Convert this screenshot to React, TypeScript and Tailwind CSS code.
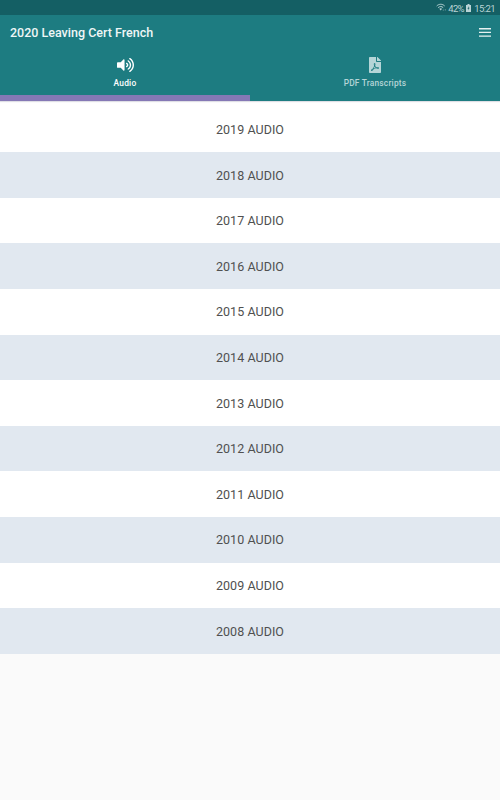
import { FaFilePdf, FaVolumeUp } from "react-icons/fa";

const years = [2019, 2018, 2017, 2016, 2015, 2014, 2013, 2012, 2011, 2010, 2009, 2008];

const StatusBar = () => {
  return (
    <div className="flex h-[15px] items-center justify-end bg-[#145f64] pt-px pr-[5px] text-[9.5px] leading-none text-[#b9d3d5]">
      <svg width="11" height="9" viewBox="0 0 11 9" fill="none" stroke="currentColor" className="mr-px mb-[2px]">
        <path d="M.7 3C3 .7 6.400 .7 8.700 3M2.200 4.600c1.500-1.400 3.500-1.400 5 0" strokeWidth="1" />
        <path d="M3.300 5.800c.9-.8 2-.8 2.800 0L4.700 7.400z" fill="currentColor" stroke="none" />
        <path d="M7.300 6.500v1.300M9.300 6v1.600" strokeWidth=".7" opacity=".6" />
      </svg>
      <span className="w-[15px] pt-px whitespace-nowrap tracking-[-0.7px]">42%</span>
      <svg width="5" height="8" viewBox="0 0 5 8" className="mr-[3px] mb-px ml-[3px]">
        <path d="M1.500 0h2v1H5v7H0V1h1.500z" fill="currentColor" />
        <path d="M2.800 2L1.500 4.700h1L2.200 6.500l1.400-2.700h-1z" fill="#145f64" />
      </svg>
      <span className="pt-px whitespace-nowrap tracking-[-0.6px]">15:21</span>
    </div>
  );
};

const Header = () => {
  return (
    <header className="flex h-[36px] items-center justify-between pr-[9px] pl-[10px]">
      <h1 className="text-[12.5px] font-medium text-[#eef6f6]">2020 Leaving Cert French</h1>
      <svg width="12" height="9" viewBox="0 0 12 9" fill="#e6f1f1" className="mb-px">
        <path d="M0 0h12v1.400H0zM0 3.700h12v1.400H0zM0 7.400h12v1.400H0z" />
      </svg>
    </header>
  );
};

const Tabs = () => {
  return (
    <nav className="grid h-[50px] grid-cols-2 text-[8.4px] font-medium leading-[10px] tracking-[0.2px]">
      <button className="flex flex-col items-center border-b-[6px] border-[#8578b5] pt-[6px] text-white">
        <FaVolumeUp className="ml-px h-[16px] w-[17px]" />
        <span className="mt-[5px]">Audio</span>
      </button>
      <button className="flex flex-col items-center pt-[6px] text-[#b5d5d7]">
        <FaFilePdf className="h-[16px] w-[12px]" />
        <span className="mt-[5px]">PDF Transcripts</span>
      </button>
    </nav>
  );
};

export default function App() {
  return (
    <div className="h-[800px] w-[500px] bg-[#fafafa] font-[Roboto,sans-serif]">
      <StatusBar />
      <div className="relative bg-[#1d7c81] shadow-[0_1px_1px_rgba(40,40,80,0.15)]">
        <Header />
        <Tabs />
      </div>
      <ul className="bg-white pt-[5.5px]">
        {years.map((year) => (
          <li
            key={year}
            className="flex h-[45.62px] items-center justify-center pt-[2px] text-[12.5px] tracking-[0.05px] text-[#505050] even:bg-[#e1e8f0]"
          >
            {year} AUDIO
          </li>
        ))}
      </ul>
    </div>
  );
}
